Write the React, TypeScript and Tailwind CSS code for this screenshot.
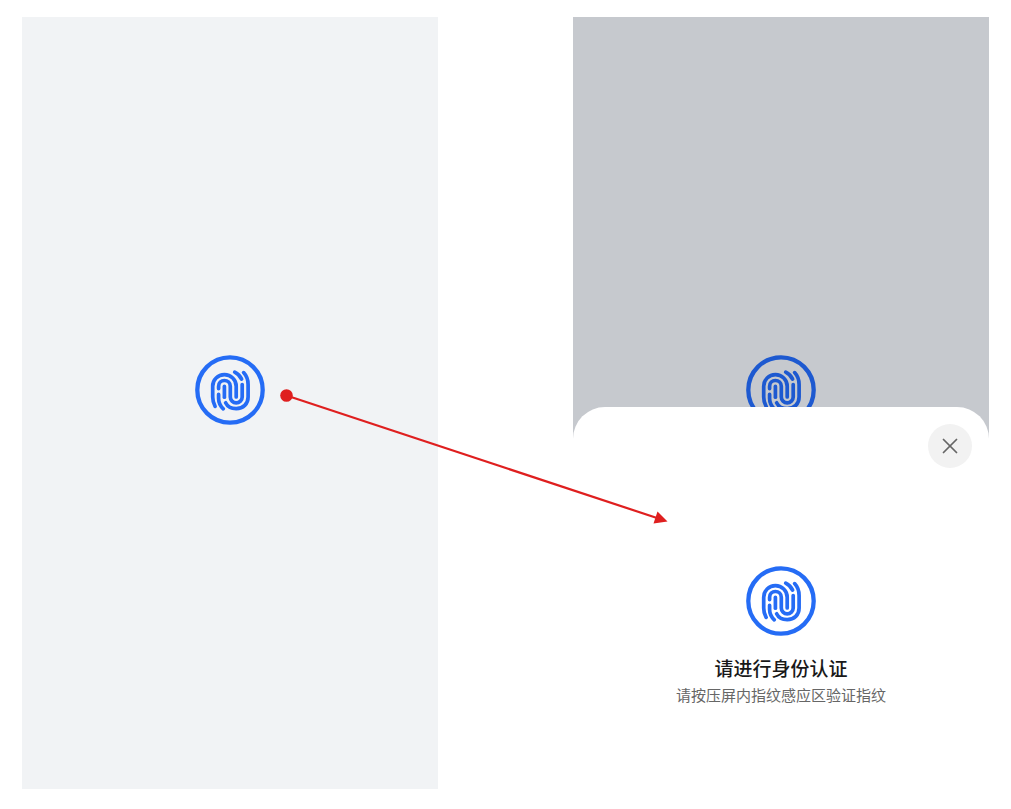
import { X } from "lucide-react";

function FingerprintIcon({ className = "" }: { className?: string }) {
  return (
    <svg
      viewBox="0 0 70 70"
      fill="none"
      stroke="currentColor"
      strokeLinecap="round"
      strokeWidth="3.7"
      aria-hidden="true"
      className={`size-[70px] shrink-0 ${className}`}
    >
      <circle cx="35" cy="35" r="32.7" strokeWidth="4.3" />
      <path d="M20.1 51.3C18.5 48.5 17.7 45.6 17.7 42V31.2C17.7 24.7 22.9 19.7 29.4 19.7S41.2 24.7 41.2 31.2V42" />
      <path d="M23.6 33.6V31.2C23.6 28 26.2 25.5 29.4 25.5S35.3 28 35.3 31.2V42C35.3 45.2 38 47.8 41.2 47.8S47.2 45.2 47.2 42V29.6" />
      <path d="M23.6 39.4V43.4C23.6 47.4 25.4 51 28.3 53.8" />
      <path d="M29.4 31.4V42.2" />
      <path d="M30.6 47.8C32.4 51.5 36.2 53.7 41.2 53.7C48.2 53.7 53.1 48.8 53.1 42V29.6C53.1 24.8 51.6 20.8 48.6 17.6" />
      <path d="M39.7 17.2C43 18.9 45.2 21.1 46.6 24.1" />
    </svg>
  );
}

function UnlockScreen({ dimmed = false }: { dimmed?: boolean }) {
  return (
    <div
      className={`flex h-full items-center justify-center pb-[26px] ${
        dimmed ? "bg-[#c6c9ce] text-[#1d59d0]" : "bg-[#f1f3f5] text-[#256cf5]"
      }`}
    >
      <button type="button" aria-label="指纹" className="rounded-full">
        <FingerprintIcon />
      </button>
    </div>
  );
}

function AuthSheet() {
  return (
    <section
      role="dialog"
      aria-labelledby="auth-title"
      className="absolute inset-x-0 bottom-0 flex h-[382px] flex-col items-center rounded-t-[32px] bg-white px-[17px] pt-[17px]"
    >
      <button
        type="button"
        aria-label="关闭"
        className="flex size-11 items-center justify-center self-end rounded-full bg-[#f2f2f2] text-[#666666]"
      >
        <X size={26} strokeWidth={1.6} />
      </button>
      <FingerprintIcon className="mt-[98px] text-[#256cf5]" />
      <h2 id="auth-title" className="mt-[18px] text-[19px] leading-7 font-medium text-[#191919]">
        请进行身份认证
      </h2>
      <p className="text-[15px] leading-[26px] text-[#666666]">请按压屏内指纹感应区验证指纹</p>
    </section>
  );
}

function FlowArrow() {
  return (
    <svg
      viewBox="0 0 967 772"
      aria-hidden="true"
      className="pointer-events-none absolute inset-0 size-full text-[#df1f1f]"
    >
      <circle cx="264.5" cy="378.5" r="6.3" fill="currentColor" />
      <path d="M264.5 378.5L635 501" stroke="currentColor" strokeWidth="2.2" />
      <path d="M645.5 504.5L631.5 506.5L635.5 494.5Z" fill="currentColor" />
    </svg>
  );
}

export default function App() {
  return (
    <main className="bg-white px-[22px] pt-[17px] pb-5 font-['Noto_Sans_CJK_SC',sans-serif]">
      <div className="relative grid grid-cols-2 gap-[135px]">
        <div className="aspect-[416/772]">
          <UnlockScreen />
        </div>
        <div className="relative aspect-[416/772]">
          <UnlockScreen dimmed />
          <AuthSheet />
        </div>
        <FlowArrow />
      </div>
    </main>
  );
}
